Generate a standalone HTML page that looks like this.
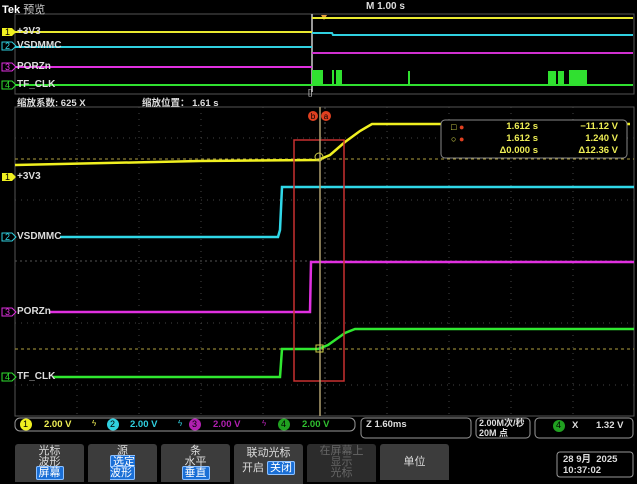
<!DOCTYPE html>
<html><head><meta charset="utf-8"><style>
body{margin:0;width:637px;height:480px;background:#000;overflow:hidden;position:relative;font-family:"Liberation Sans","Noto Sans CJK SC",sans-serif;}
.a{position:absolute;white-space:nowrap;}
.btn{position:absolute;top:444px;width:69px;height:36px;background:#3c3c3c;border-radius:3px 3px 0 0;color:#ddd;font-size:11px;text-align:center;line-height:11px;}
.hl{background:#1a6fd6;color:#fff;border:1px solid #8cc0ff;border-radius:2px;padding:0 2px;}
.b{font-weight:bold;}
</style></head><body>
<svg width="637" height="480" style="position:absolute;left:0;top:0" xmlns="http://www.w3.org/2000/svg">
<rect x="15" y="14" width="619" height="80" fill="none" stroke="#555" stroke-width="1"/>
<line x1="312" y1="14" x2="312" y2="92" stroke="#ccc" stroke-width="1.5"/>
<polygon points="321,15 327,15 324,20" fill="#e8a040"/>
<line x1="15" y1="32" x2="312" y2="32" stroke="#e8e830" stroke-width="2"/>
<line x1="312" y1="18" x2="633" y2="18" stroke="#e8e830" stroke-width="2"/>
<line x1="15" y1="47" x2="312" y2="47" stroke="#30d0e0" stroke-width="2"/>
<polyline points="312,33 332,33 333,35 633,35" fill="none" stroke="#30d0e0" stroke-width="2"/>
<line x1="15" y1="67" x2="312" y2="67" stroke="#e030e0" stroke-width="2"/>
<line x1="312" y1="53" x2="633" y2="53" stroke="#d030d0" stroke-width="2"/>
<line x1="15" y1="85" x2="633" y2="85" stroke="#30e030" stroke-width="2"/>
<g fill="#30e030"><rect x="312" y="70" width="11" height="15"/><rect x="332" y="70" width="2" height="15"/><rect x="336" y="70" width="6" height="15"/><rect x="408" y="71" width="2" height="14"/><rect x="548" y="71" width="8" height="14"/><rect x="558" y="71" width="6" height="14"/><rect x="569" y="70" width="18" height="15"/></g>
<text x="308" y="95" fill="#ccc" font-size="8" font-family="Liberation Sans">[]</text>
<rect x="15" y="107" width="619" height="309" fill="none" stroke="#555"/>
<g stroke="#444" stroke-dasharray="1,5">
<line x1="77" y1="107" x2="77" y2="416"/><line x1="139" y1="107" x2="139" y2="416"/><line x1="201" y1="107" x2="201" y2="416"/><line x1="263" y1="107" x2="263" y2="416"/><line x1="387" y1="107" x2="387" y2="416"/><line x1="449" y1="107" x2="449" y2="416"/><line x1="511" y1="107" x2="511" y2="416"/><line x1="573" y1="107" x2="573" y2="416"/>
<line x1="15" y1="138" x2="634" y2="138"/><line x1="15" y1="200" x2="634" y2="200"/><line x1="15" y1="323" x2="634" y2="323"/><line x1="15" y1="385" x2="634" y2="385"/>
</g>
<line x1="15" y1="261" x2="634" y2="261" stroke="#555" stroke-dasharray="2,3"/>
<line x1="325" y1="107" x2="325" y2="416" stroke="#555" stroke-dasharray="2,3"/>
<line x1="15" y1="159" x2="634" y2="159" stroke="#b0a040" stroke-dasharray="3,3"/>
<line x1="15" y1="349" x2="634" y2="349" stroke="#b0a040" stroke-dasharray="3,3"/>
<polyline points="15,165 200,161 318,160 330,155 345,142 360,131 372,124 630,124" fill="none" stroke="#f0f020" stroke-width="2.5"/>
<polyline points="60,237 278,237 280,230 282,187 634,187" fill="none" stroke="#30d8e8" stroke-width="2.5"/>
<polyline points="50,312 310,312 311,262 634,262" fill="none" stroke="#e030e0" stroke-width="2.5"/>
<polyline points="53,377 280,377 282,349 318,349 328,345 345,333 355,329 634,329" fill="none" stroke="#30e830" stroke-width="2.5"/>
<rect x="294" y="140" width="50" height="241" fill="none" stroke="#c83030" stroke-width="1.5"/>
<line x1="320" y1="107" x2="320" y2="416" stroke="#b0a070" stroke-width="1.5"/>
<circle cx="319" cy="157" r="4" fill="none" stroke="#cc4"/>
<rect x="316" y="345" width="7" height="7" fill="none" stroke="#cc4"/>
<circle cx="313" cy="116" r="5" fill="#e04020"/><circle cx="326" cy="116" r="5" fill="#e04020"/>
<text x="313" y="119" fill="#000" font-size="8" text-anchor="middle">b</text><text x="326" y="119" fill="#000" font-size="8" text-anchor="middle">a</text>
<rect x="441" y="120" width="186" height="38" rx="4" fill="#000" stroke="#888"/>
<g font-size="9" font-family="Liberation Sans">
<polygon points="2,28 12,28 16,32 12,36 2,36" fill="#f0f020"/><text x="5" y="35" fill="#000">1</text>
<polygon points="2,42 12,42 16,46 12,50 2,50" fill="none" stroke="#30d0e0"/><text x="5" y="49" fill="#30d0e0">2</text>
<polygon points="2,63 12,63 16,67 12,71 2,71" fill="none" stroke="#e030e0"/><text x="5" y="70" fill="#e030e0">3</text>
<polygon points="2,81 12,81 16,85 12,89 2,89" fill="none" stroke="#30e030"/><text x="5" y="88" fill="#30e030">4</text>
<polygon points="2,173 12,173 16,177 12,181 2,181" fill="#f0f020"/><text x="5" y="180" fill="#000">1</text>
<polygon points="2,233 12,233 16,237 12,241 2,241" fill="none" stroke="#30d0e0"/><text x="5" y="240" fill="#30d0e0">2</text>
<polygon points="2,308 12,308 16,312 12,316 2,316" fill="none" stroke="#e030e0"/><text x="5" y="315" fill="#e030e0">3</text>
<polygon points="2,373 12,373 16,377 12,381 2,381" fill="none" stroke="#30e030"/><text x="5" y="380" fill="#30e030">4</text>
</g>
<rect x="15" y="418" width="340" height="13" rx="5" fill="none" stroke="#999"/>
<rect x="361" y="418" width="110" height="20" rx="4" fill="none" stroke="#999"/>
<rect x="476" y="418" width="54" height="20" rx="4" fill="none" stroke="#999"/>
<rect x="535" y="418" width="98" height="20" rx="4" fill="none" stroke="#999"/>
<rect x="557" y="452" width="76" height="25" rx="3" fill="none" stroke="#999"/>
<circle cx="26" cy="424.5" r="6" fill="#f0f020"/><circle cx="113" cy="424.5" r="6" fill="#30d0e0"/><circle cx="195" cy="424.5" r="6" fill="#b020b0"/><circle cx="284" cy="424.5" r="6" fill="#20a020"/><circle cx="559" cy="426" r="6" fill="#20a020"/>
</svg>
<div class="a" style="left:2px;top:1px;color:#fff;font-size:11px;"><b>Tek</b> <span style="color:#ccc">预览</span></div>
<div class="a b" style="left:366px;top:1px;color:#ddd;font-size:10px;">M 1.00 s</div>
<div class="a b" style="left:17px;top:26px;color:#ddd;font-size:10px;">+3V3</div>
<div class="a b" style="left:17px;top:40px;color:#ddd;font-size:10px;">VSDMMC</div>
<div class="a b" style="left:17px;top:61px;color:#ddd;font-size:10px;">PORZn</div>
<div class="a b" style="left:17px;top:79px;color:#ddd;font-size:10px;">TF_CLK</div>
<div class="a b" style="left:17px;top:95px;color:#ddd;font-size:9.5px;">缩放系数: 625 X</div>
<div class="a b" style="left:142px;top:95px;color:#ddd;font-size:9.5px;">缩放位置： 1.61 s</div>
<div class="a b" style="left:17px;top:171px;color:#ddd;font-size:10px;">+3V3</div>
<div class="a b" style="left:17px;top:231px;color:#ddd;font-size:10px;">VSDMMC</div>
<div class="a b" style="left:17px;top:306px;color:#ddd;font-size:10px;">PORZn</div>
<div class="a b" style="left:17px;top:371px;color:#ddd;font-size:10px;">TF_CLK</div>
<div class="a" style="left:451px;top:121px;color:#ee5;font-size:9px;line-height:12px;">□ <span style="color:#e04020">●</span><br>○ <span style="color:#e04020">●</span></div>
<div class="a b" style="left:488px;top:121px;color:#ee5;font-size:9.5px;line-height:12px;text-align:right;width:50px;">1.612 s<br>1.612 s<br>Δ0.000 s</div>
<div class="a b" style="left:556px;top:121px;color:#ee5;font-size:9.5px;line-height:12px;text-align:right;width:62px;">−11.12 V<br>1.240 V<br>Δ12.36 V</div>
<div class="a" style="left:23px;top:419px;font-size:9px;color:#000;">1</div>
<div class="a b" style="left:44px;top:419px;font-size:9.5px;color:#ee5;">2.00 V</div>
<div class="a" style="left:92px;top:419px;font-size:8px;color:#ee5;">ϟ</div>
<div class="a" style="left:110px;top:419px;font-size:9px;color:#000;">2</div>
<div class="a b" style="left:130px;top:419px;font-size:9.5px;color:#30d0e0;">2.00 V</div>
<div class="a" style="left:178px;top:419px;font-size:8px;color:#30d0e0;">ϟ</div>
<div class="a" style="left:192px;top:419px;font-size:9px;color:#000;">3</div>
<div class="a b" style="left:213px;top:419px;font-size:9.5px;color:#b020b0;">2.00 V</div>
<div class="a" style="left:262px;top:419px;font-size:8px;color:#b020b0;">ϟ</div>
<div class="a" style="left:281px;top:419px;font-size:9px;color:#000;">4</div>
<div class="a b" style="left:302px;top:419px;font-size:9.5px;color:#30c030;">2.00 V</div>
<div class="a b" style="left:366px;top:419px;font-size:9.5px;color:#ddd;">Z 1.60ms</div>
<div class="a b" style="left:479px;top:418px;font-size:9px;color:#ddd;line-height:10px;">2.00M次/秒<br>20M 点</div>
<div class="a" style="left:556px;top:420px;font-size:9px;color:#000;">4</div>
<div class="a b" style="left:572px;top:420px;font-size:9.5px;color:#ddd;">X</div>
<div class="a b" style="left:596px;top:420px;font-size:9.5px;color:#ddd;">1.32 V</div>
<div class="btn" style="left:15px;padding-top:2px;">光标<br>波形<br><span class="hl">屏幕</span></div>
<div class="btn" style="left:88px;padding-top:2px;">源<br><span class="hl">选定<br>波形</span></div>
<div class="btn" style="left:161px;padding-top:2px;">条<br>水平<br><span class="hl">垂直</span></div>
<div class="btn" style="left:234px;padding-top:4px;">联动光标<br><div style="margin-top:4px">开启 <span class="hl">关闭</span></div></div>
<div class="btn" style="left:307px;padding-top:2px;color:#666;background:#2c2c2c;">在屏幕上<br>显示<br>光标</div>
<div class="btn" style="left:380px;line-height:36px;">单位</div>
<div class="a b" style="left:563px;top:454px;font-size:9.5px;color:#ddd;line-height:11px;">28 9月&nbsp; 2025<br>10:37:02</div>
</body></html>
